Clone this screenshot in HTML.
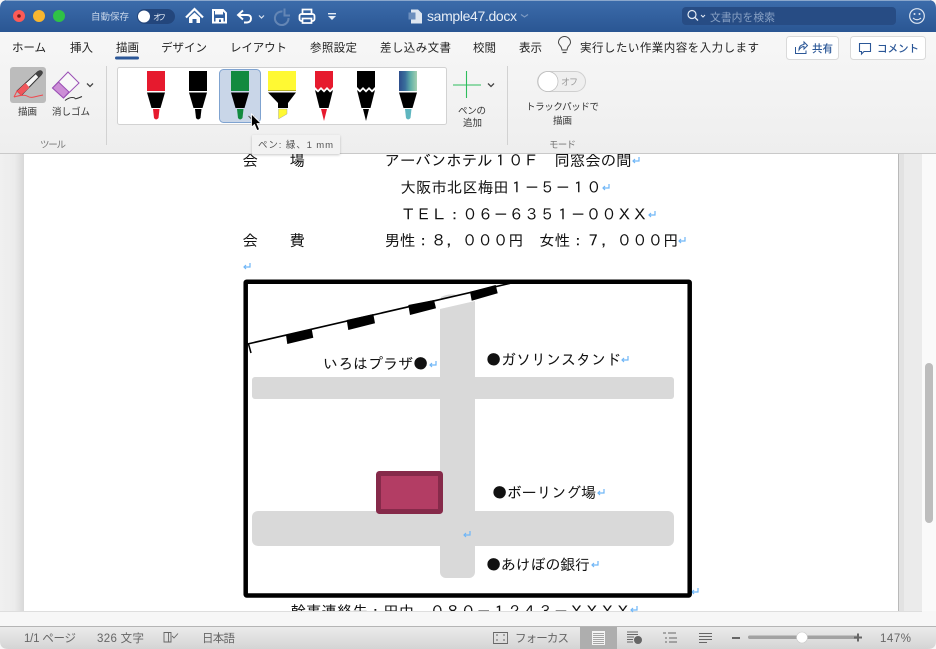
<!DOCTYPE html>
<html><head><meta charset="utf-8"><style>
html,body{margin:0;padding:0;width:936px;height:649px;overflow:hidden;background:#f6f6f6}
svg{display:block}
text{font-family:"Liberation Sans","Noto Sans CJK JP",sans-serif}
.d{font-family:"IPAGothic","Liberation Sans","Noto Sans CJK JP",sans-serif;font-size:15.45px;fill:#111}
.m{font-family:"IPAGothic","Liberation Sans","Noto Sans CJK JP",sans-serif;font-size:15px;fill:#111}
.t{font-size:11.5px;fill:#222}
.s{font-size:9.5px;fill:#333}
.g{font-size:9.5px;fill:#777}
.b{font-size:11.5px;fill:#666}
.r{fill:none;stroke:#6fb6f7;stroke-width:1.2}
</style></head><body>
<svg width="936" height="649" viewBox="0 0 936 649" xmlns="http://www.w3.org/2000/svg">
<defs>
<linearGradient id="tb" x1="0" y1="0" x2="0" y2="1"><stop offset="0" stop-color="#3c6cab"/><stop offset="1" stop-color="#2a5693"/></linearGradient>
<linearGradient id="rb" x1="0" y1="0" x2="0" y2="1"><stop offset="0" stop-color="#f7f7f7"/><stop offset="1" stop-color="#eeeeee"/></linearGradient>
<linearGradient id="sb" x1="0" y1="0" x2="0" y2="1"><stop offset="0" stop-color="#ebebeb"/><stop offset="1" stop-color="#d4d4d4"/></linearGradient>
<linearGradient id="gx" x1="0" y1="0" x2="1" y2="0"><stop offset="0" stop-color="#2d4d8c"/><stop offset=".35" stop-color="#3a6f9c"/><stop offset=".65" stop-color="#62b0a8"/><stop offset="1" stop-color="#a5d0b0"/></linearGradient>
<linearGradient id="lg" x1="0" y1="0" x2="1" y2="0"><stop offset="0" stop-color="#f0f0f0"/><stop offset=".6" stop-color="#ececec"/><stop offset="1" stop-color="#d8d8d8"/></linearGradient>
<filter id="sh" x="-10%" y="-20%" width="120%" height="150%"><feDropShadow dx="0" dy="1" stdDeviation="1.2" flood-color="#000" flood-opacity=".22"/></filter>
<clipPath id="docclip"><rect x="0" y="154" width="936" height="457"/></clipPath>
</defs>

<!-- base -->
<rect width="936" height="649" fill="#f7f7f7"/>

<!-- document area -->
<rect x="0" y="154" width="24" height="457" fill="url(#lg)"/>
<rect x="24" y="154" width="874" height="457" fill="#fff"/>
<rect x="898" y="154" width="24" height="457" fill="#ebebeb"/>
<rect x="898" y="154" width="1" height="457" fill="#b9b9b9"/>
<rect x="899" y="154" width="5" height="457" fill="#e2e2e2"/>
<rect x="922" y="154" width="14" height="457" fill="#fafafa"/>
<rect x="925" y="363" width="8" height="160" rx="4" fill="#bdbdbd"/>
<rect x="0" y="611" width="922" height="1" fill="#dedede"/>

<g clip-path="url(#docclip)">
<text class="d" x="242.500" y="166">会</text><text class="d" x="289.500" y="166">場</text>
<text class="d" x="384.500" y="166" textLength="247">アーバンホテル１０Ｆ　同窓会の間</text>
<text class="d" x="400.500" y="193" textLength="201">大阪市北区梅田１－５－１０</text>
<text class="d" x="400.500" y="220" textLength="247">ＴＥＬ：０６－６３５１－００ＸＸ</text>
<text class="d" x="242.500" y="246">会</text><text class="d" x="289.500" y="246">費</text>
<text class="d" x="384.500" y="246" textLength="294">男性：８，０００円　女性：７，０００円</text>
<text class="d" x="290.500" y="617" textLength="340">幹事連絡先：田中　０８０－１２４３－ＸＸＸＸ</text>
</g>
<path class="r" d="M639 157v4h-6m2-2l-2 2 2 2"/>
<path class="r" d="M609 184v4h-6m2-2l-2 2 2 2"/>
<path class="r" d="M655 211v4h-6m2-2l-2 2 2 2"/>
<path class="r" d="M685 237v4h-6m2-2l-2 2 2 2"/>
<path class="r" d="M250 263v4h-6m2-2l-2 2 2 2"/>
<path class="r" d="M698 588v4h-6m2-2l-2 2 2 2"/>
<path class="r" d="M637 606v4h-6m2-2l-2 2 2 2"/>

<!-- map -->
<rect x="252" y="377" width="422" height="22" rx="3" fill="#d9d9d9"/>
<path d="M440 309L475 301V572a6 6 0 0 1-6 6H446a6 6 0 0 1-6-6Z" fill="#d9d9d9"/>
<path d="M441 297q8-4 16-2l-16 5Z" fill="#d9d9d9"/>
<rect x="252" y="511" width="422" height="35" rx="6" fill="#d9d9d9"/>
<rect x="378.500" y="473.500" width="62" height="38" rx="1" fill="#b33d64" stroke="#862a4a" stroke-width="5"/>
<path d="M247.500 344L510 283.300" stroke="#000" stroke-width="1.600" fill="none"/>
<path d="M248.500 344l2.500 9" stroke="#000" stroke-width="1.500" fill="none"/>
<path d="M286 335L311.700 329 313.300 337.700 287.300 344Z"/>
<path d="M346.700 320L373.300 314 375 323.300 348.300 330Z"/>
<path d="M408.300 305L434 300 436 308.300 410 315Z"/>
<path d="M470 291.700L495.700 285 497.700 293.300 471.700 300.700Z"/>
<rect x="245.700" y="281.700" width="444" height="313.800" rx="1" fill="none" stroke="#000" stroke-width="4.500"/>
<text class="m" x="323" y="369" textLength="105">いろはプラザ●</text>
<path class="r" d="M436 361v4h-6m2-2l-2 2 2 2"/>
<text class="m" x="486" y="365" textLength="135">●ガソリンスタンド</text>
<path class="r" d="M628 356v4h-6m2-2l-2 2 2 2"/>
<text class="m" x="492" y="498" textLength="104">●ボーリング場</text>
<path class="r" d="M604 489v4h-6m2-2l-2 2 2 2"/>
<path class="r" d="M470 531v4h-6m2-2l-2 2 2 2"/>
<text class="m" x="486" y="570" textLength="104">●あけぼの銀行</text>
<path class="r" d="M598 561v4h-6m2-2l-2 2 2 2"/>

<!-- title bar -->
<path d="M0 32V8Q0 0 8 0H928Q936 0 936 8V32Z" fill="url(#tb)"/>
<rect x="6" y="0" width="924" height="1" fill="#8aa7cc"/>
<circle cx="19" cy="16" r="6" fill="#fc5b57"/><circle cx="19" cy="16" r="1.800" fill="#7a1a17"/>
<circle cx="39" cy="16" r="6" fill="#f8b62f"/>
<circle cx="59" cy="16" r="6" fill="#2fc246"/>
<text x="91" y="20" font-size="9.500" fill="#c5d4e8" textLength="38">自動保存</text>
<rect x="137" y="9" width="38" height="15" rx="7.500" fill="#23467c"/>
<circle cx="144" cy="16.500" r="6" fill="#fff"/>
<text x="153" y="20" font-size="8" fill="#e5ecf5" textLength="13">オフ</text>
<!-- home -->
<path d="M186 17.500L194.500 9 203 17.500" fill="none" stroke="#fff" stroke-width="2.200"/>
<path d="M189 17.500L194.500 12.500 200 17.500V23H196.500V19H192.500V23H189Z" fill="#fff"/>
<!-- save -->
<path d="M213 10H223L226 13V22.500H213Z" fill="none" stroke="#fff" stroke-width="2"/>
<rect x="215" y="10" width="8" height="4.500" fill="#fff"/>
<rect x="215.500" y="18" width="8" height="5" fill="#fff"/><rect x="219" y="19.500" width="2" height="2.500" fill="#2f5b99"/>
<!-- undo -->
<path d="M243 10.500L238 15 243 19.500M238.500 15H247Q251 15 251 18.500T247 22.500H244" fill="none" stroke="#fff" stroke-width="1.900"/>
<path d="M259 15.500l2.500 2.500 2.500-2.500" fill="none" stroke="#d9e3f0" stroke-width="1.200"/>
<!-- redo -->
<path d="M282.500 11.500A6.800 6.800 0 1 0 288.500 18M284.500 8.500V15.500H290" fill="none" stroke="#6486b5" stroke-width="2"/>
<!-- print -->
<rect x="299.500" y="14" width="15" height="7" rx="2" fill="none" stroke="#fff" stroke-width="1.800"/>
<rect x="302.500" y="9.500" width="9" height="4.500" fill="none" stroke="#fff" stroke-width="1.700"/>
<rect x="302.500" y="18.500" width="9" height="4.500" fill="#2f5b99" stroke="#fff" stroke-width="1.700"/>
<!-- more -->
<rect x="328" y="13" width="8" height="1.400" fill="#e6edf6"/><path d="M328 16h8l-4 4Z" fill="#e6edf6"/>
<!-- doc icon -->
<path d="M411 9.500H418L422 13.500V23.500H411Z" fill="#dfe7f1"/><rect x="408.500" y="12.500" width="7" height="7" fill="#6d8fbd"/>
<text x="427" y="21" font-size="14" fill="#e6edf6" textLength="90">sample47.docx</text>
<path d="M521 14.500l3.500 2.500 3.500-2.500" fill="none" stroke="#7f9cc4" stroke-width="1.100"/>
<!-- search -->
<rect x="682" y="7" width="214" height="18" rx="4" fill="#274c84"/>
<circle cx="692" cy="14.500" r="4" fill="none" stroke="#e3eaf4" stroke-width="1.200"/><path d="M695 17.500l3 3" stroke="#e3eaf4" stroke-width="1.300"/>
<path d="M701 15l2 2 2-2" fill="none" stroke="#e3eaf4" stroke-width="1"/>
<text x="710" y="21" font-size="10.800" fill="#88a1c4" textLength="65">文書内を検索</text>
<!-- smiley -->
<circle cx="917" cy="16" r="7.300" fill="none" stroke="#dfe7f2" stroke-width="1.200"/>
<circle cx="914.500" cy="14" r="1" fill="#dfe7f2"/><circle cx="919.500" cy="14" r="1" fill="#dfe7f2"/>
<path d="M913 18q4 3.500 8 0" fill="none" stroke="#dfe7f2" stroke-width="1.100"/>

<!-- ribbon -->
<rect x="0" y="32" width="936" height="121" fill="url(#rb)"/>
<rect x="0" y="153" width="936" height="1" fill="#c9c9c9"/>
<text class="t" x="12" y="51.500" textLength="34">ホーム</text>
<text class="t" x="70" y="51.500" textLength="23">挿入</text>
<text class="t" x="116" y="51.500" textLength="23">描画</text>
<rect x="115" y="56.500" width="24" height="3" rx="1.500" fill="#2b5797"/>
<text class="t" x="161" y="51.500" textLength="46">デザイン</text>
<text class="t" x="230" y="51.500" textLength="57">レイアウト</text>
<text class="t" x="310" y="51.500" textLength="47">参照設定</text>
<text class="t" x="380" y="51.500" textLength="71">差し込み文書</text>
<text class="t" x="473" y="51.500" textLength="23">校閲</text>
<text class="t" x="519" y="51.500" textLength="23">表示</text>
<!-- bulb -->
<g transform="translate(0.500,1.500)">
<path d="M561.500 48.500Q561 45.500 559.500 44Q558 42 558 41A6 6 0 0 1 570 41Q570 42.500 568.500 44Q567 45.500 566.500 48.500Z" fill="none" stroke="#444" stroke-width="1"/>
<path d="M562 51h4" stroke="#444" stroke-width="1.200"/>
</g>
<text class="t" x="580" y="51.500" textLength="179">実行したい作業内容を入力します</text>
<!-- share -->
<rect x="786.500" y="36.500" width="52" height="23" rx="3" fill="#fff" stroke="#dadada"/>
<path d="M795.500 47v6.500h10.500v-3M799 50q0-5 5-5.500v-2.500l3.500 3.500-3.500 3.500v-2.500q-3 0-5 3.500Z" fill="none" stroke="#2b5797" stroke-width="1"/>
<text x="812" y="52" font-size="10.500" font-weight="500" fill="#2b5797" textLength="21">共有</text>
<rect x="850.500" y="36.500" width="75" height="23" rx="3" fill="#fff" stroke="#dadada"/>
<path d="M859.500 43.500h11v8h-6.500l-2.500 2.500v-2.500H859.500Z" fill="none" stroke="#2b5797" stroke-width="1.100"/>
<text x="877" y="52" font-size="10.500" font-weight="500" fill="#2b5797" textLength="42">コメント</text>

<rect x="106" y="66" width="1" height="79" fill="#d2d2d2"/>
<rect x="507" y="66" width="1" height="79" fill="#d2d2d2"/>

<!-- draw tool -->
<rect x="10" y="67" width="36" height="36" rx="3" fill="#bcbcbc"/>
<path d="M17 91L38 71.500Q40.500 70 41.800 71.500T41 75L21.500 95Z" fill="#f6f6f6" stroke="#333" stroke-width="1"/>
<path d="M38 71.500Q40.500 70 41.800 71.500T41 75L38.500 77.500 35.500 74Z" fill="#444"/>
<path d="M17 91L25.500 83 29.500 87.500 21.500 95Z" fill="#f0575c"/>
<path d="M14 97L17 91 21.500 95 14 97Q24 94 27 96T34 97T43 95" fill="none" stroke="#f0484e" stroke-width="1"/>
<text class="s" x="18" y="115" textLength="19">描画</text>
<!-- eraser -->
<path d="M52.500 88L68 72 79 83 63.500 98Z" fill="#f8f8f8" stroke="#9a4fb5" stroke-width="1"/>
<path d="M52.500 88L58.500 82 69 92 63.500 98Z" fill="#cc8ed6" stroke="#9a4fb5" stroke-width="1"/>
<path d="M65 100.500q4-3 7-3t3 1 7-2" fill="none" stroke="#333" stroke-width="1"/>
<path d="M87 83.500l3 3 3-3" fill="none" stroke="#444" stroke-width="1.300"/>
<text class="s" x="52" y="115" textLength="38">消しゴム</text>
<text class="g" x="40" y="148" textLength="26">ツール</text>

<!-- pens -->
<rect x="117.500" y="67.500" width="329" height="57" rx="2" fill="#fff" stroke="#d2d2d2"/>
<rect x="219.500" y="69.500" width="41" height="53" rx="4" fill="#c9d6e8" stroke="#7fa3d0"/>

<rect x="147" y="71" width="18" height="20" fill="#e61a2e"/>
<path d="M147 92.500H165L160.500 108H151.500Z"/>
<path d="M153 109H159.500L158.500 118Q156 121 154 118Z" fill="#e61a2e"/>

<rect x="189" y="71" width="18" height="20"/>
<path d="M189 92.500H207L202.500 108H193.500Z"/>
<path d="M195 109H201.500L200.500 118Q198 121 196 118Z"/>

<rect x="231" y="71" width="18" height="20" fill="#128a3f"/>
<path d="M231 92.500H249L244.500 108H235.500Z"/>
<path d="M237 109H243.500L242.500 118Q240 121 238 118Z" fill="#128a3f"/>

<rect x="268" y="71" width="28" height="19" fill="#fff933"/>
<rect x="268" y="90" width="28" height="1" fill="#b5b022"/>
<path d="M268 92.500H296L288 103V108H278V103Z"/>
<path d="M278.500 109H287V114L278.500 119Z" fill="#fff933" stroke="#999" stroke-width=".4"/>

<path d="M315 71H333V87L330 90 327 87 324 90 321 87 318 90 315 87Z" fill="#e61a2e"/>
<path d="M315 90L318 92.500 321 89.500 324 92.500 327 89.500 330 92.500 333 90 328.500 108H319.500Z"/>
<path d="M321 109H327L324 121Z" fill="#e61a2e"/>

<path d="M357 71H375V87L372 90 369 87 366 90 363 87 360 90 357 87Z"/>
<path d="M357 90L360 92.500 363 89.500 366 92.500 369 89.500 372 92.500 375 90 370.500 108H361.500Z"/>
<path d="M363 109H369L366 121Z"/>

<rect x="399" y="71" width="18" height="20" fill="url(#gx)"/>
<path d="M399 92.500H417L412.500 108H403.500Z"/>
<path d="M405 109H411.500L410.500 118Q408 121 406 118Z" fill="#5fb6bf"/>

<!-- add pen -->
<path d="M453 85H481M466.500 71V98" stroke="#2dbd5c" stroke-width="1.100" fill="none"/>
<path d="M488 83.500l3 3 3-3" fill="none" stroke="#444" stroke-width="1.300"/>
<text class="s" x="458" y="114" textLength="28">ペンの</text>
<text class="s" x="463" y="126" textLength="19">追加</text>

<!-- toggle -->
<rect x="537.500" y="71.500" width="48" height="20" rx="10" fill="#efefef" stroke="#cfcfcf"/>
<circle cx="548" cy="81.500" r="10" fill="#fff" stroke="#bbb" stroke-width=".7"/>
<text x="561" y="85" font-size="9" fill="#999" textLength="17">オフ</text>
<text class="s" x="526" y="110" textLength="73">トラックパッドで</text>
<text class="s" x="553" y="124" textLength="19">描画</text>
<text class="g" x="549" y="148" textLength="27">モード</text>

<!-- tooltip -->
<rect x="252" y="135" width="88" height="19" rx="1" fill="#f2f2f2" filter="url(#sh)"/>
<text x="258" y="148" font-size="9.500" fill="#555" textLength="75">ペン: 緑、1 mm</text>
<!-- chevron under cursor -->
<path d="M248.500 116l3 3 3-3" fill="none" stroke="#555" stroke-width="1"/>
<!-- cursor -->
<path d="M251.500 114V127L254.500 124.500 257 130.500 259.500 129.500 257 123.500H261Z" fill="#000" stroke="#fff" stroke-width=".8"/>

<!-- status bar -->
<path d="M0 627H936V641Q936 649 928 649H8Q0 649 0 641Z" fill="url(#sb)"/>
<rect x="0" y="626" width="936" height="1" fill="#b5b5b5"/>
<text class="b" x="24" y="642" textLength="52">1/1 ページ</text>
<text class="b" x="97" y="642" textLength="47">326 文字</text>
<path d="M164 632.500H168.500V642H164ZM168.500 632.500H171V642H168.500" fill="none" stroke="#666" stroke-width=".9"/>
<path d="M172 636l2 2 4-4.500" fill="none" stroke="#666" stroke-width=".9"/>
<text class="b" x="202" y="642" textLength="33">日本語</text>
<path d="M493.500 636v-3.500h14v11h-14V636M496 635h2M503 635h2M496 640h2M503 640h2" fill="none" stroke="#666" stroke-width=".9"/>
<text class="b" x="515" y="642" textLength="54">フォーカス</text>
<rect x="580" y="627" width="37" height="22" fill="#aeaeae"/>
<rect x="592" y="631" width="13" height="14" fill="#f4f4f4"/>
<path d="M593 633.500h11M593 635.500h11M593 637.500h11M593 639.500h11M593 641.500h11M593 643.500h11" stroke="#8a8a8a" stroke-width=".7"/>
<path d="M627 632h11M627 634.500h11M627 637h7M627 639.500h6M627 642h6" stroke="#666" stroke-width="1"/>
<circle cx="638" cy="640" r="4" fill="#666"/>
<path d="M663 633h3M668 633h8M665 638h2M669 638h8M665 642h2M669 642h8" stroke="#666" stroke-width="1"/>
<path d="M699 633.500h13M699 636.500h13M699 639.500h13M699 642.500h8" stroke="#666" stroke-width="1"/>
<rect x="732" y="637" width="8" height="2" fill="#666"/>
<rect x="748" y="635.500" width="110" height="3.500" rx="1.700" fill="#a2a2a2"/>
<circle cx="802" cy="637.500" r="5.500" fill="#fff" stroke="#c9c9c9" stroke-width=".6"/>
<path d="M854 637.500h8M858 633.500v8" stroke="#666" stroke-width="2"/>
<text class="b" x="880" y="642" textLength="31">147%</text>
</svg>
</body></html>
